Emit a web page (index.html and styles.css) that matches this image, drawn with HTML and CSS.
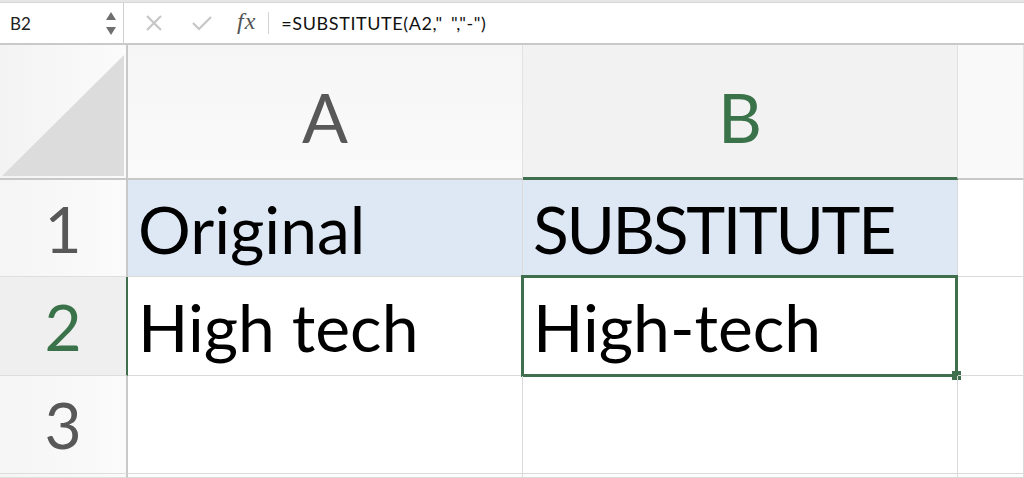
FILE: index.html
```html
<!DOCTYPE html>
<html>
<head>
<meta charset="utf-8">
<link rel="stylesheet" href="styles.css">
</head>
<body>
<div class="app">
  <div class="topstrip"></div>
  <div class="fbar">
    <div class="namebox">
      <span class="ref">B2</span>
      <span class="spin">
        <svg width="10" height="8" viewBox="0 0 10 8"><path d="M5 0 L10 8 L0 8 Z" fill="#6f6f6f"/></svg>
        <svg width="10" height="8" viewBox="0 0 10 8"><path d="M0 0 L10 0 L5 8 Z" fill="#6f6f6f"/></svg>
      </span>
    </div>
    <div class="tools">
      <svg class="icon-x" width="18" height="18" viewBox="0 0 18 18"><path d="M2 2 L16 16 M16 2 L2 16" stroke="#c6c6c6" stroke-width="2.2" fill="none"/></svg>
      <svg class="icon-ok" width="22" height="18" viewBox="0 0 22 18"><path d="M2 9 L8 15 L20 3" stroke="#c6c6c6" stroke-width="2.2" fill="none"/></svg>
      <span class="fx">fx</span>
      <span class="sep"></span>
    </div>
    <div class="formula">=SUBSTITUTE(A2," ","-")</div>
  </div>
  <div class="sheet">
    <div class="cell corner"><div class="tri"></div></div>
    <div class="cell colhead">A</div>
    <div class="cell colhead active">B</div>
    <div class="cell colhead last"></div>

    <div class="cell rowhead">1</div>
    <div class="cell data hl">Original</div>
    <div class="cell data hl caps">SUBSTITUTE</div>
    <div class="cell data last"></div>

    <div class="cell rowhead active">2</div>
    <div class="cell data">High tech</div>
    <div class="cell data selected">High-tech<span class="sel"><span class="handle"></span></span></div>
    <div class="cell data last"></div>

    <div class="cell rowhead">3</div>
    <div class="cell data"></div>
    <div class="cell data"></div>
    <div class="cell data last"></div>

    <div class="cell rowhead"></div>
    <div class="cell data"></div>
    <div class="cell data"></div>
    <div class="cell data last"></div>
  </div>
</div>
</body>
</html>
```

FILE: styles.css
```css
* { box-sizing: border-box; }
html, body {
  margin: 0;
  padding: 0;
  background: #ffffff;
  overflow: hidden;
}
.app {
  width: 1024px;
  height: 478px;
  overflow: hidden;
  font-family: Lato, "Open Sans", sans-serif;
}
.topstrip {
  height: 3px;
  background: #e6e6e6;
  border-bottom: 1px solid #d6d6d6;
}
.fbar {
  height: 42px;
  display: flex;
  align-items: center;
  background: #ffffff;
  border-bottom: 2px solid #c9c9c9;
}
.namebox {
  width: 124px;
  height: 100%;
  display: flex;
  align-items: center;
  justify-content: space-between;
  padding: 0 7px 0 10px;
  border-right: 1px solid #cfcfcf;
}
.ref {
  font-size: 17px;
  color: #222;
}
.spin {
  display: flex;
  flex-direction: column;
  gap: 7px;
}
.spin svg { display: block; }
.tools {
  display: flex;
  align-items: center;
  height: 100%;
  padding-left: 21px;
}
.icon-x { margin-right: 28px; }
.icon-ok { margin-right: 24px; }
.fx {
  font-family: "Liberation Serif", serif;
  font-style: italic;
  font-size: 24px;
  color: #555;
  margin-top: -4px;
  letter-spacing: 1px;
}
.sep {
  width: 1px;
  height: 22px;
  background: #d4d4d4;
  margin-left: 12px;
}
.formula {
  margin-left: 12px;
  font-size: 18px;
  letter-spacing: 0.6px;
  word-spacing: 3px;
  color: #111;
}
.sheet {
  display: grid;
  grid-template-columns: 128px 395px 435px 1fr;
  grid-template-rows: 135px 97px 99px 98px 4px;
}
.cell {
  border-right: 1px solid #dadada;
  border-bottom: 1px solid #dadada;
  display: flex;
  align-items: center;
  position: relative;
  min-width: 0;
}
.corner {
  background: linear-gradient(90deg, #f3f3f3, #fbfbfb);
  border-right: 2px solid #c8c8c8;
  border-bottom: 2px solid #c8c8c8;
  padding: 10px 2px 2px 2px;
  align-items: stretch;
}
.tri {
  flex: 1;
  background: #dcdcdc;
  clip-path: polygon(100% 0, 100% 100%, 0 100%);
}
.colhead {
  background: linear-gradient(180deg, #f6f6f6, #fafafa);
  border-bottom: 2px solid #c8c8c8;
  border-right: 1px solid #e2e2e2;
  justify-content: center;
  font-size: 68px;
  color: #585858;
  padding-top: 10px;
}
.colhead.active {
  background: #f2f2f2;
  color: #3a7349;
  border-bottom: 3px solid #3f6f4c;
}
.colhead.last {
  background: #f9f9f9;
}
.rowhead {
  background: linear-gradient(90deg, #f5f5f5, #fbfbfb);
  border-right: 2px solid #c8c8c8;
  border-bottom: 1px solid #dedede;
  justify-content: center;
  font-size: 64px;
  color: #585858;
}
.rowhead.active {
  background: #efefef;
  color: #3a7349;
  border-right: 2px solid #3f6f4c;
}
.data {
  font-size: 66px;
  color: #000;
  padding-left: 10px;
  white-space: nowrap;
}
.data.caps {
  letter-spacing: -2.4px;
}
.data.hl {
  background: #dee8f5;
}
.sel {
  position: absolute;
  left: -2px;
  top: -2px;
  right: -1px;
  bottom: -2px;
  border: 3px solid #3f6f4c;
  pointer-events: none;
}
.handle {
  position: absolute;
  right: -6px;
  bottom: -6px;
  width: 9px;
  height: 9px;
  background: #3f6f4c;
}
```
